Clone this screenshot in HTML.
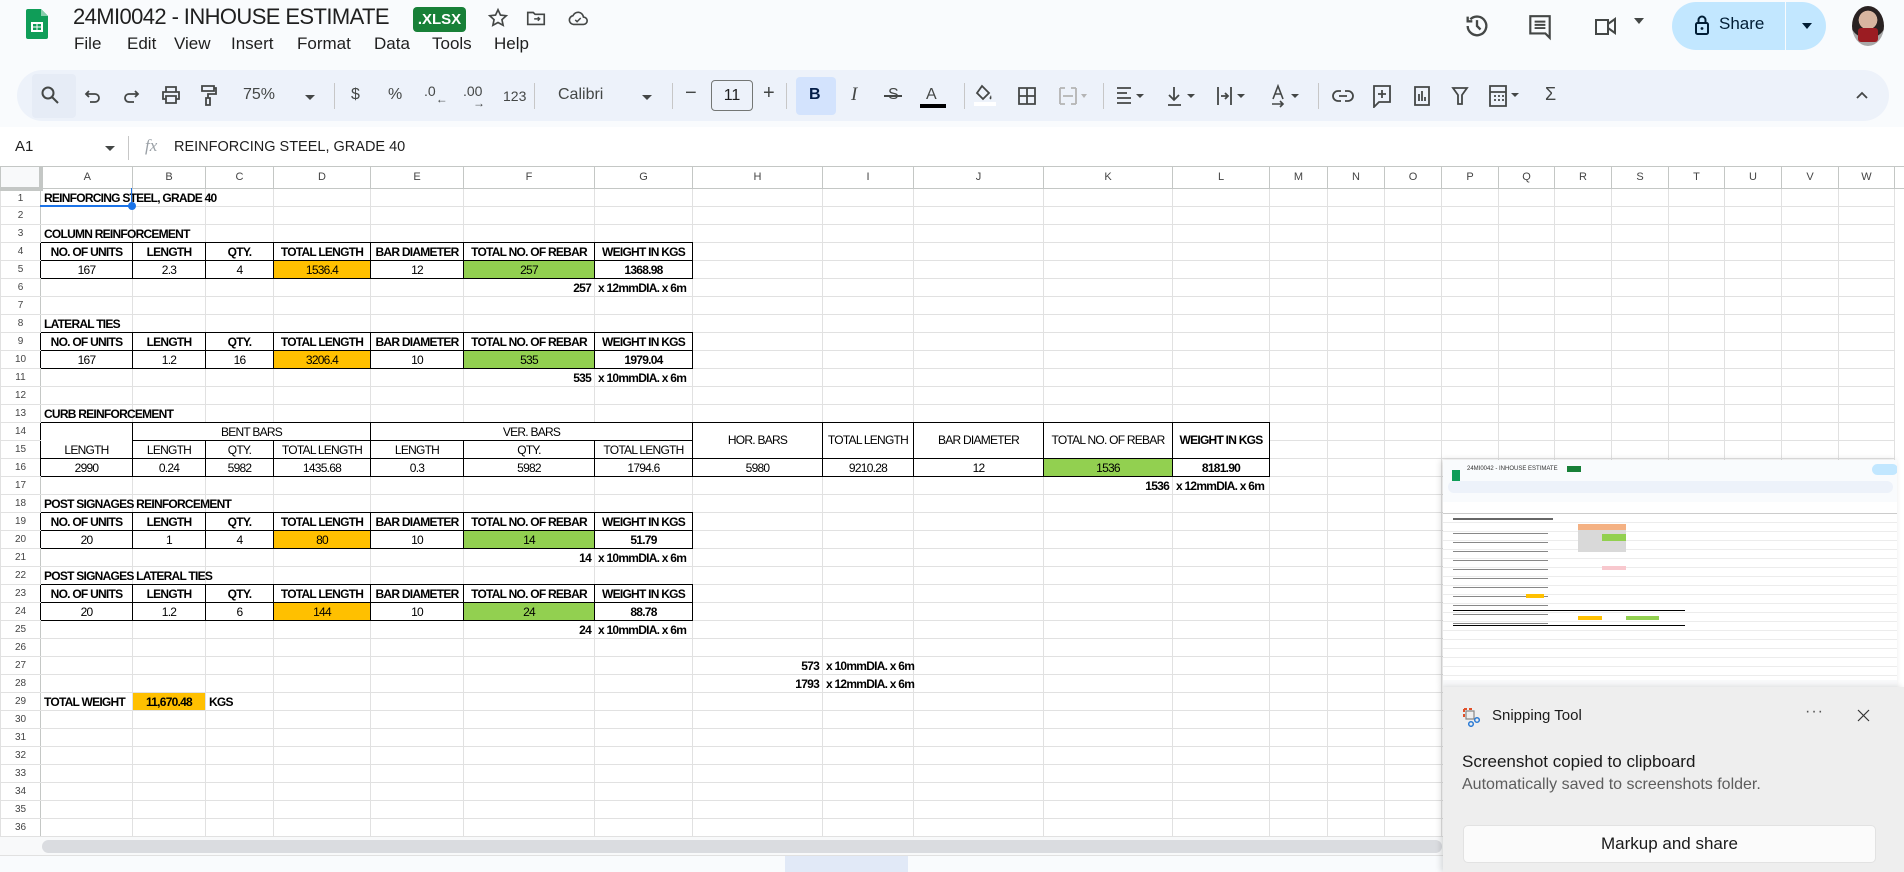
<!DOCTYPE html>
<html><head><meta charset="utf-8">
<style>
*{box-sizing:border-box;margin:0;padding:0}
body{width:1904px;height:872px;overflow:hidden;background:#f9fbfd;font-family:"Liberation Sans",sans-serif;position:relative;color:#1f1f1f}
.a{position:absolute}
.menu span{position:absolute;top:34px;font-size:17px;color:#1f1f1f}
.tb{position:absolute;left:17px;top:70px;width:1872px;height:51px;border-radius:26px;background:#edf2fa}
.ti{position:absolute;top:86px;font-size:16px;color:#444746}
.sep{position:absolute;top:83px;width:1px;height:26px;background:#c7c7c7}
svg.i{position:absolute}
#grid{position:absolute;left:0;top:166px;background:#fff;border-collapse:collapse;table-layout:fixed;width:1904px}
#grid td{height:18px;border:1px solid #e1e1e1;font-family:"Liberation Sans",sans-serif;font-size:12px;letter-spacing:-0.75px;white-space:nowrap;overflow:visible;padding:0 3px;vertical-align:bottom;line-height:15px;color:#000}
#grid tr.hd td{height:22px;text-align:center;vertical-align:middle;color:#444;font-size:11px;letter-spacing:0;border-color:#c4c7c5;border-bottom:1px solid #c4c7c5}
#grid td.h{text-align:center;color:#444;font-size:10px;letter-spacing:0;vertical-align:middle;border-right:1px solid #c4c7c5;padding:0}
#grid td.kl{border-right:1px solid #000}
#grid td.kt{border-bottom:1px solid #000}
#grid td.k{border:1px solid #000}
#grid td.c{text-align:center}
#grid td.r{text-align:right}
#grid td.b{font-weight:bold}
#grid td.or{background:#ffc000}
#grid td.gr{background:#92d050}
#grid td.m{vertical-align:middle}
</style></head><body>

<svg class="i" style="left:26px;top:9px" width="22" height="30" viewBox="0 0 22 30"><path d="M2 0h13l7 7v21a2 2 0 0 1-2 2H2a2 2 0 0 1-2-2V2a2 2 0 0 1 2-2z" fill="#0f9d58"/><path d="M15 0l7 7h-7z" fill="#87ceac"/><rect x="5" y="13" width="12" height="10" fill="#fff"/><rect x="7" y="15" width="3.5" height="2.5" fill="#0f9d58"/><rect x="11.5" y="15" width="3.5" height="2.5" fill="#0f9d58"/><rect x="7" y="18.5" width="3.5" height="2.5" fill="#0f9d58"/><rect x="11.5" y="18.5" width="3.5" height="2.5" fill="#0f9d58"/></svg>
<div class="a" style="left:73px;top:4px;font-size:22px;letter-spacing:-0.6px;color:#1f1f1f">24MI0042 - INHOUSE ESTIMATE</div>
<div class="a" style="left:413px;top:7px;width:53px;height:25px;background:#188038;border-radius:4px;color:#fff;font-size:15px;font-weight:bold;text-align:center;line-height:25px">.XLSX</div>
<svg class="i" style="left:487px;top:7px" width="22" height="22" viewBox="0 0 24 24"><path d="M12 3l2.7 5.8 6.3.7-4.7 4.3 1.3 6.2L12 16.9 6.4 20l1.3-6.2L3 9.5l6.3-.7z" fill="none" stroke="#444746" stroke-width="1.8"/></svg>
<svg class="i" style="left:525px;top:7px" width="22" height="22" viewBox="0 0 24 24"><path d="M3 6h6l2 2h10v11H3z" fill="none" stroke="#444746" stroke-width="1.8"/><path d="M10 13h6m-2-2l2 2-2 2" stroke="#444746" stroke-width="1.6" fill="none"/></svg>
<svg class="i" style="left:566px;top:7px" width="24" height="22" viewBox="0 0 24 24"><path d="M7 19h11a4 4 0 0 0 0-8 6 6 0 0 0-11.5-1.5A4.8 4.8 0 0 0 7 19z" fill="none" stroke="#444746" stroke-width="1.8"/><path d="M9 14l2 2 4-4" stroke="#444746" stroke-width="1.6" fill="none"/></svg>
<div class="menu"><span style="left:74px">File</span><span style="left:127px">Edit</span><span style="left:174px">View</span><span style="left:231px">Insert</span><span style="left:297px">Format</span><span style="left:374px">Data</span><span style="left:432px">Tools</span><span style="left:494px">Help</span></div>

<svg class="i" style="left:1463px;top:12px" width="28" height="28" viewBox="0 0 24 24"><path d="M4 12a8 8 0 1 0 2.3-5.7M4 4v4h4" fill="none" stroke="#444746" stroke-width="2"/><path d="M12 7v5l3 3" fill="none" stroke="#444746" stroke-width="2"/></svg>
<svg class="i" style="left:1527px;top:13px" width="26" height="28" viewBox="0 0 24 26"><path d="M3 3h18v16H21v4l-4-4H3z" fill="none" stroke="#444746" stroke-width="2"/><path d="M7 8h10M7 11h10M7 14h10" stroke="#444746" stroke-width="1.8"/></svg>
<svg class="i" style="left:1593px;top:14px" width="28" height="24" viewBox="0 0 28 24"><path d="M3 6h12v14H3z M15 10l7-5v14l-7-5" fill="none" stroke="#444746" stroke-width="2"/></svg>
<div class="a" style="left:1634px;top:18px;width:0;height:0;border-left:5px solid transparent;border-right:5px solid transparent;border-top:6px solid #444746"></div>
<div class="a" style="left:1672px;top:2px;width:154px;height:48px;border-radius:24px;background:#c2e7ff"></div>
<div class="a" style="left:1785px;top:2px;width:1px;height:48px;background:#f9fbfd"></div>
<svg class="i" style="left:1694px;top:14px" width="16" height="22" viewBox="0 0 16 22"><rect x="2" y="9" width="12" height="11" rx="1.5" fill="none" stroke="#001d35" stroke-width="2"/><path d="M4.5 9V6a3.5 3.5 0 0 1 7 0v3" fill="none" stroke="#001d35" stroke-width="2"/><circle cx="8" cy="14.5" r="1.4" fill="#001d35"/></svg>
<div class="a" style="left:1719px;top:14px;font-size:17px;color:#001d35">Share</div>
<div class="a" style="left:1802px;top:23px;width:0;height:0;border-left:5px solid transparent;border-right:5px solid transparent;border-top:6px solid #001d35"></div>
<div class="a" style="left:1852px;top:6px;width:32px;height:40px;border-radius:50%;background:radial-gradient(circle at 50% 35%,#d8b5a0 0 30%,#2a2222 31% 60%,#a8a8a8 61%);overflow:hidden"><div class="a" style="left:6px;top:22px;width:20px;height:14px;background:#9b1c22;border-radius:3px"></div></div>

<div class="tb"></div>
<div class="a" style="left:32px;top:74px;width:44px;height:44px;border-radius:4px;background:#e6ecf6"></div>
<svg class="i" style="left:40px;top:85px" width="20" height="20" viewBox="0 0 20 20"><circle cx="8" cy="8" r="5.5" fill="none" stroke="#444746" stroke-width="2"/><path d="M12 12l6 6" stroke="#444746" stroke-width="2"/></svg>
<svg class="i" style="left:84px;top:87px" width="18" height="18" viewBox="0 0 18 18"><path d="M5 4L2 7l3 3M2 7h9a4 4 0 0 1 0 8H6" fill="none" stroke="#444746" stroke-width="1.8"/></svg>
<svg class="i" style="left:122px;top:87px" width="18" height="18" viewBox="0 0 18 18"><path d="M13 4l3 3-3 3M16 7H7a4 4 0 0 0 0 8h5" fill="none" stroke="#444746" stroke-width="1.8"/></svg>
<svg class="i" style="left:161px;top:85px" width="20" height="20" viewBox="0 0 20 20"><path d="M5 7V2h10v5M5 14H2V7h16v7h-3M5 11h10v7H5z" fill="none" stroke="#444746" stroke-width="1.8"/></svg>
<svg class="i" style="left:199px;top:84px" width="18" height="22" viewBox="0 0 18 22"><path d="M3 2h12v5H3zM15 4h2v6H9v4M7 14h4v7H7z" fill="none" stroke="#444746" stroke-width="1.8"/></svg>
<div class="ti" style="left:243px;font-size:16px">75%</div>
<div class="a" style="left:305px;top:95px;border-left:5px solid transparent;border-right:5px solid transparent;border-top:5px solid #444746"></div>
<div class="sep" style="left:334px"></div>
<div class="ti" style="left:351px">$</div>
<div class="ti" style="left:388px">%</div>
<div class="ti" style="left:424px;font-size:14px;top:83px">.0<span style="font-size:12px;position:relative;top:7px">←</span></div>
<div class="ti" style="left:463px;font-size:14px;top:83px">.00<span style="font-size:12px;position:absolute;left:10px;top:13px">→</span></div>
<div class="ti" style="left:503px;font-size:14px;top:88px">123</div>
<div class="sep" style="left:534px"></div>
<div class="ti" style="left:558px;font-size:16px">Calibri</div>
<div class="a" style="left:642px;top:95px;border-left:5px solid transparent;border-right:5px solid transparent;border-top:5px solid #444746"></div>
<div class="sep" style="left:672px"></div>
<div class="ti" style="left:685px;font-size:20px;top:82px">−</div>
<div class="a" style="left:711px;top:80px;width:42px;height:31px;border:1px solid #747775;border-radius:4px;font-size:16px;text-align:center;line-height:29px;color:#1f1f1f">11</div>
<div class="ti" style="left:763px;font-size:20px;top:82px">+</div>
<div class="sep" style="left:786px"></div>
<div class="a" style="left:796px;top:77px;width:40px;height:38px;border-radius:4px;background:#d3e3fd"></div>
<div class="ti" style="left:809px;font-weight:bold;color:#041e49">B</div>
<div class="ti" style="left:851px;font-style:italic;font-family:'Liberation Serif',serif;font-size:19px;top:84px">I</div>
<div class="ti" style="left:888px">S</div><div class="a" style="left:884px;top:95px;width:18px;height:2px;background:#444746"></div>
<div class="ti" style="left:926px">A</div><div class="a" style="left:920px;top:104px;width:26px;height:4px;background:#000"></div>
<div class="sep" style="left:964px"></div>
<svg class="i" style="left:974px;top:83px" width="22" height="24" viewBox="0 0 22 24"><path d="M8 3l7 7-6 6-6-6z" fill="none" stroke="#444746" stroke-width="1.8"/><path d="M17 12c-1 2-2 3-1 4s2 0 1-4z" fill="#444746"/><rect x="0" y="19" width="22" height="4" fill="#fff"/></svg>
<svg class="i" style="left:1017px;top:86px" width="20" height="20" viewBox="0 0 20 20"><path d="M2 2h16v16H2zM10 2v16M2 10h16" fill="none" stroke="#444746" stroke-width="1.8"/></svg>
<svg class="i" style="left:1058px;top:86px" width="30" height="20" viewBox="0 0 30 20"><path d="M2 2h5M2 18h5M13 2h5M13 18h5M2 2v16M18 2v16M5 10h10" fill="none" stroke="#b4b4b4" stroke-width="1.8"/><path d="M23 8l3 4 3-4z" fill="#b4b4b4"/></svg>
<div class="sep" style="left:1103px"></div>
<svg class="i" style="left:1115px;top:86px" width="36" height="20" viewBox="0 0 36 20"><path d="M2 2h14M2 7h10M2 12h14M2 17h14" stroke="#444746" stroke-width="1.8"/><path d="M21 8l4 4 4-4z" fill="#444746"/></svg>
<svg class="i" style="left:1166px;top:85px" width="36" height="22" viewBox="0 0 36 22"><path d="M8 2v12M3 10l5 5 5-5M2 20h13" fill="none" stroke="#444746" stroke-width="1.8"/><path d="M21 9l4 4 4-4z" fill="#444746"/></svg>
<svg class="i" style="left:1216px;top:85px" width="36" height="22" viewBox="0 0 36 22"><path d="M2 2v18M15 2v18M5 11h7M9 8l3 3-3 3" fill="none" stroke="#444746" stroke-width="1.8"/><path d="M21 9l4 4 4-4z" fill="#444746"/></svg>
<svg class="i" style="left:1270px;top:84px" width="36" height="24" viewBox="0 0 36 24"><path d="M3 15L8 2l5 13M5 10h6M2 20h11M10 17l3 3-3 3" fill="none" stroke="#444746" stroke-width="1.6"/><path d="M21 10l4 4 4-4z" fill="#444746"/></svg>
<div class="sep" style="left:1318px"></div>
<svg class="i" style="left:1332px;top:88px" width="22" height="16" viewBox="0 0 22 16"><path d="M9 3H6a5 5 0 0 0 0 10h3M13 3h3a5 5 0 0 1 0 10h-3M7 8h8" fill="none" stroke="#444746" stroke-width="1.8"/></svg>
<svg class="i" style="left:1372px;top:84px" width="20" height="24" viewBox="0 0 20 24"><path d="M2 2h16v16H7l-5 5z" fill="none" stroke="#444746" stroke-width="1.8"/><path d="M10 6v8M6 10h8" stroke="#444746" stroke-width="1.8"/></svg>
<svg class="i" style="left:1413px;top:85px" width="18" height="22" viewBox="0 0 18 22"><path d="M2 2h14v18H2z" fill="none" stroke="#444746" stroke-width="1.8"/><path d="M6 16V9M9 16V6M12 16v-4" stroke="#444746" stroke-width="1.8"/></svg>
<svg class="i" style="left:1451px;top:86px" width="18" height="20" viewBox="0 0 18 20"><path d="M2 2h14l-5 7v9H7V9z" fill="none" stroke="#444746" stroke-width="1.8"/></svg>
<svg class="i" style="left:1488px;top:84px" width="36" height="24" viewBox="0 0 36 24"><path d="M2 2h16v20H2zM2 8h16M6 12h2M10 12h2M14 12h2M6 16h2M10 16h2M14 16h2" fill="none" stroke="#444746" stroke-width="1.8"/><path d="M23 9l4 4 4-4z" fill="#444746"/></svg>
<div class="ti" style="left:1545px;font-size:18px;top:84px">Σ</div>
<svg class="i" style="left:1855px;top:90px" width="14" height="10" viewBox="0 0 14 10"><path d="M2 8l5-5 5 5" fill="none" stroke="#444746" stroke-width="1.8"/></svg>

<div class="a" style="left:0;top:127px;width:1904px;height:39px;background:#fff"></div>
<div class="a" style="left:15px;top:138px;font-size:15px">A1</div>
<div class="a" style="left:105px;top:146px;border-left:5px solid transparent;border-right:5px solid transparent;border-top:5px solid #444746"></div>
<div class="a" style="left:128px;top:136px;width:1px;height:24px;background:#c7c7c7"></div>
<div class="a" style="left:145px;top:136px;font-size:17px;font-style:italic;font-family:'Liberation Serif',serif;color:#9aa0a6">fx</div>
<div class="a" style="left:174px;top:139px;font-size:14.5px">REINFORCING STEEL, GRADE 40</div>

<table id="grid">
<colgroup><col style="width:40px"><col style="width:92px"><col style="width:73px"><col style="width:68px"><col style="width:97px"><col style="width:93px"><col style="width:131px"><col style="width:98px"><col style="width:130px"><col style="width:91px"><col style="width:130px"><col style="width:129px"><col style="width:97px"><col style="width:58px"><col style="width:57px"><col style="width:57px"><col style="width:57px"><col style="width:56px"><col style="width:57px"><col style="width:57px"><col style="width:56px"><col style="width:57px"><col style="width:57px"><col style="width:56px"><col style="width:10px"></colgroup>
<tr class="hd"><td style="background:#f8f9fa;border-right:4px solid #c4c7c5;border-bottom:4px solid #c4c7c5"></td><td>A</td><td>B</td><td>C</td><td>D</td><td>E</td><td>F</td><td>G</td><td>H</td><td>I</td><td>J</td><td>K</td><td>L</td><td>M</td><td>N</td><td>O</td><td>P</td><td>Q</td><td>R</td><td>S</td><td>T</td><td>U</td><td>V</td><td>W</td><td></td></tr>
<tr><td class="h">1</td><td class="b">REINFORCING STEEL, GRADE 40</td><td></td><td></td><td></td><td></td><td></td><td></td><td></td><td></td><td></td><td></td><td></td><td></td><td></td><td></td><td></td><td></td><td></td><td></td><td></td><td></td><td></td><td></td></tr>
<tr><td class="h">2</td><td></td><td></td><td></td><td></td><td></td><td></td><td></td><td></td><td></td><td></td><td></td><td></td><td></td><td></td><td></td><td></td><td></td><td></td><td></td><td></td><td></td><td></td><td></td></tr>
<tr><td class="h">3</td><td class="b kt">COLUMN REINFORCEMENT</td><td class="kt"></td><td class="kt"></td><td class="kt"></td><td class="kt"></td><td class="kt"></td><td class="kt"></td><td></td><td></td><td></td><td></td><td></td><td></td><td></td><td></td><td></td><td></td><td></td><td></td><td></td><td></td><td></td><td></td></tr>
<tr><td class="h kl">4</td><td class="k c b">NO. OF UNITS</td><td class="k c b">LENGTH</td><td class="k c b">QTY.</td><td class="k c b">TOTAL LENGTH</td><td class="k c b">BAR DIAMETER</td><td class="k c b">TOTAL NO. OF REBAR</td><td class="k c b">WEIGHT IN KGS</td><td></td><td></td><td></td><td></td><td></td><td></td><td></td><td></td><td></td><td></td><td></td><td></td><td></td><td></td><td></td><td></td></tr>
<tr><td class="h kl">5</td><td class="k c">167</td><td class="k c">2.3</td><td class="k c">4</td><td class="k c or">1536.4</td><td class="k c">12</td><td class="k c gr">257</td><td class="k c b">1368.98</td><td></td><td></td><td></td><td></td><td></td><td></td><td></td><td></td><td></td><td></td><td></td><td></td><td></td><td></td><td></td><td></td></tr>
<tr><td class="h">6</td><td></td><td></td><td></td><td></td><td></td><td class="r b">257</td><td class="b">x 12mmDIA. x 6m</td><td></td><td></td><td></td><td></td><td></td><td></td><td></td><td></td><td></td><td></td><td></td><td></td><td></td><td></td><td></td><td></td></tr>
<tr><td class="h">7</td><td></td><td></td><td></td><td></td><td></td><td></td><td></td><td></td><td></td><td></td><td></td><td></td><td></td><td></td><td></td><td></td><td></td><td></td><td></td><td></td><td></td><td></td><td></td></tr>
<tr><td class="h">8</td><td class="b kt">LATERAL TIES</td><td class="kt"></td><td class="kt"></td><td class="kt"></td><td class="kt"></td><td class="kt"></td><td class="kt"></td><td></td><td></td><td></td><td></td><td></td><td></td><td></td><td></td><td></td><td></td><td></td><td></td><td></td><td></td><td></td><td></td></tr>
<tr><td class="h kl">9</td><td class="k c b">NO. OF UNITS</td><td class="k c b">LENGTH</td><td class="k c b">QTY.</td><td class="k c b">TOTAL LENGTH</td><td class="k c b">BAR DIAMETER</td><td class="k c b">TOTAL NO. OF REBAR</td><td class="k c b">WEIGHT IN KGS</td><td></td><td></td><td></td><td></td><td></td><td></td><td></td><td></td><td></td><td></td><td></td><td></td><td></td><td></td><td></td><td></td></tr>
<tr><td class="h kl">10</td><td class="k c">167</td><td class="k c">1.2</td><td class="k c">16</td><td class="k c or">3206.4</td><td class="k c">10</td><td class="k c gr">535</td><td class="k c b">1979.04</td><td></td><td></td><td></td><td></td><td></td><td></td><td></td><td></td><td></td><td></td><td></td><td></td><td></td><td></td><td></td><td></td></tr>
<tr><td class="h">11</td><td></td><td></td><td></td><td></td><td></td><td class="r b">535</td><td class="b">x 10mmDIA. x 6m</td><td></td><td></td><td></td><td></td><td></td><td></td><td></td><td></td><td></td><td></td><td></td><td></td><td></td><td></td><td></td><td></td></tr>
<tr><td class="h">12</td><td></td><td></td><td></td><td></td><td></td><td></td><td></td><td></td><td></td><td></td><td></td><td></td><td></td><td></td><td></td><td></td><td></td><td></td><td></td><td></td><td></td><td></td><td></td></tr>
<tr><td class="h">13</td><td class="b kt">CURB REINFORCEMENT</td><td class="kt"></td><td class="kt"></td><td class="kt"></td><td class="kt"></td><td class="kt"></td><td class="kt"></td><td class="kt"></td><td class="kt"></td><td class="kt"></td><td class="kt"></td><td class="kt"></td><td></td><td></td><td></td><td></td><td></td><td></td><td></td><td></td><td></td><td></td><td></td></tr>
<tr><td class="h kl">14</td><td class="k c" rowspan="2">LENGTH</td><td class="k c" colspan="3">BENT BARS</td><td class="k c" colspan="3">VER. BARS</td><td class="k c m" rowspan="2">HOR. BARS</td><td class="k c m" rowspan="2">TOTAL LENGTH</td><td class="k c m" rowspan="2">BAR DIAMETER</td><td class="k c m" rowspan="2">TOTAL NO. OF REBAR</td><td class="k c m b" rowspan="2">WEIGHT IN KGS</td><td></td><td></td><td></td><td></td><td></td><td></td><td></td><td></td><td></td><td></td><td></td></tr>
<tr><td class="h kl">15</td><td class="k c">LENGTH</td><td class="k c">QTY.</td><td class="k c">TOTAL LENGTH</td><td class="k c">LENGTH</td><td class="k c">QTY.</td><td class="k c">TOTAL LENGTH</td><td></td><td></td><td></td><td></td><td></td><td></td><td></td><td></td><td></td><td></td><td></td></tr>
<tr><td class="h kl">16</td><td class="k c">2990</td><td class="k c">0.24</td><td class="k c">5982</td><td class="k c">1435.68</td><td class="k c">0.3</td><td class="k c">5982</td><td class="k c">1794.6</td><td class="k c">5980</td><td class="k c">9210.28</td><td class="k c">12</td><td class="k c gr">1536</td><td class="k c b">8181.90</td><td></td><td></td><td></td><td></td><td></td><td></td><td></td><td></td><td></td><td></td><td></td></tr>
<tr><td class="h">17</td><td></td><td></td><td></td><td></td><td></td><td></td><td></td><td></td><td></td><td></td><td class="r b">1536</td><td class="b">x 12mmDIA. x 6m</td><td></td><td></td><td></td><td></td><td></td><td></td><td></td><td></td><td></td><td></td><td></td></tr>
<tr><td class="h">18</td><td class="b kt">POST SIGNAGES REINFORCEMENT</td><td class="kt"></td><td class="kt"></td><td class="kt"></td><td class="kt"></td><td class="kt"></td><td class="kt"></td><td></td><td></td><td></td><td></td><td></td><td></td><td></td><td></td><td></td><td></td><td></td><td></td><td></td><td></td><td></td><td></td></tr>
<tr><td class="h kl">19</td><td class="k c b">NO. OF UNITS</td><td class="k c b">LENGTH</td><td class="k c b">QTY.</td><td class="k c b">TOTAL LENGTH</td><td class="k c b">BAR DIAMETER</td><td class="k c b">TOTAL NO. OF REBAR</td><td class="k c b">WEIGHT IN KGS</td><td></td><td></td><td></td><td></td><td></td><td></td><td></td><td></td><td></td><td></td><td></td><td></td><td></td><td></td><td></td><td></td></tr>
<tr><td class="h kl">20</td><td class="k c">20</td><td class="k c">1</td><td class="k c">4</td><td class="k c or">80</td><td class="k c">10</td><td class="k c gr">14</td><td class="k c b">51.79</td><td></td><td></td><td></td><td></td><td></td><td></td><td></td><td></td><td></td><td></td><td></td><td></td><td></td><td></td><td></td><td></td></tr>
<tr><td class="h">21</td><td></td><td></td><td></td><td></td><td></td><td class="r b">14</td><td class="b">x 10mmDIA. x 6m</td><td></td><td></td><td></td><td></td><td></td><td></td><td></td><td></td><td></td><td></td><td></td><td></td><td></td><td></td><td></td><td></td></tr>
<tr><td class="h">22</td><td class="b kt">POST SIGNAGES LATERAL TIES</td><td class="kt"></td><td class="kt"></td><td class="kt"></td><td class="kt"></td><td class="kt"></td><td class="kt"></td><td></td><td></td><td></td><td></td><td></td><td></td><td></td><td></td><td></td><td></td><td></td><td></td><td></td><td></td><td></td><td></td></tr>
<tr><td class="h kl">23</td><td class="k c b">NO. OF UNITS</td><td class="k c b">LENGTH</td><td class="k c b">QTY.</td><td class="k c b">TOTAL LENGTH</td><td class="k c b">BAR DIAMETER</td><td class="k c b">TOTAL NO. OF REBAR</td><td class="k c b">WEIGHT IN KGS</td><td></td><td></td><td></td><td></td><td></td><td></td><td></td><td></td><td></td><td></td><td></td><td></td><td></td><td></td><td></td><td></td></tr>
<tr><td class="h kl">24</td><td class="k c">20</td><td class="k c">1.2</td><td class="k c">6</td><td class="k c or">144</td><td class="k c">10</td><td class="k c gr">24</td><td class="k c b">88.78</td><td></td><td></td><td></td><td></td><td></td><td></td><td></td><td></td><td></td><td></td><td></td><td></td><td></td><td></td><td></td><td></td></tr>
<tr><td class="h">25</td><td></td><td></td><td></td><td></td><td></td><td class="r b">24</td><td class="b">x 10mmDIA. x 6m</td><td></td><td></td><td></td><td></td><td></td><td></td><td></td><td></td><td></td><td></td><td></td><td></td><td></td><td></td><td></td><td></td></tr>
<tr><td class="h">26</td><td></td><td></td><td></td><td></td><td></td><td></td><td></td><td></td><td></td><td></td><td></td><td></td><td></td><td></td><td></td><td></td><td></td><td></td><td></td><td></td><td></td><td></td><td></td></tr>
<tr><td class="h">27</td><td></td><td></td><td></td><td></td><td></td><td></td><td></td><td class="r b">573</td><td class="b">x 10mmDIA. x 6m</td><td></td><td></td><td></td><td></td><td></td><td></td><td></td><td></td><td></td><td></td><td></td><td></td><td></td><td></td></tr>
<tr><td class="h">28</td><td></td><td></td><td></td><td></td><td></td><td></td><td></td><td class="r b">1793</td><td class="b">x 12mmDIA. x 6m</td><td></td><td></td><td></td><td></td><td></td><td></td><td></td><td></td><td></td><td></td><td></td><td></td><td></td><td></td></tr>
<tr><td class="h">29</td><td class="b">TOTAL WEIGHT</td><td class="c b or">11,670.48</td><td class="b">KGS</td><td></td><td></td><td></td><td></td><td></td><td></td><td></td><td></td><td></td><td></td><td></td><td></td><td></td><td></td><td></td><td></td><td></td><td></td><td></td><td></td></tr>
<tr><td class="h">30</td><td></td><td></td><td></td><td></td><td></td><td></td><td></td><td></td><td></td><td></td><td></td><td></td><td></td><td></td><td></td><td></td><td></td><td></td><td></td><td></td><td></td><td></td><td></td></tr>
<tr><td class="h">31</td><td></td><td></td><td></td><td></td><td></td><td></td><td></td><td></td><td></td><td></td><td></td><td></td><td></td><td></td><td></td><td></td><td></td><td></td><td></td><td></td><td></td><td></td><td></td></tr>
<tr><td class="h">32</td><td></td><td></td><td></td><td></td><td></td><td></td><td></td><td></td><td></td><td></td><td></td><td></td><td></td><td></td><td></td><td></td><td></td><td></td><td></td><td></td><td></td><td></td><td></td></tr>
<tr><td class="h">33</td><td></td><td></td><td></td><td></td><td></td><td></td><td></td><td></td><td></td><td></td><td></td><td></td><td></td><td></td><td></td><td></td><td></td><td></td><td></td><td></td><td></td><td></td><td></td></tr>
<tr><td class="h">34</td><td></td><td></td><td></td><td></td><td></td><td></td><td></td><td></td><td></td><td></td><td></td><td></td><td></td><td></td><td></td><td></td><td></td><td></td><td></td><td></td><td></td><td></td><td></td></tr>
<tr><td class="h">35</td><td></td><td></td><td></td><td></td><td></td><td></td><td></td><td></td><td></td><td></td><td></td><td></td><td></td><td></td><td></td><td></td><td></td><td></td><td></td><td></td><td></td><td></td><td></td></tr>
<tr><td class="h">36</td><td></td><td></td><td></td><td></td><td></td><td></td><td></td><td></td><td></td><td></td><td></td><td></td><td></td><td></td><td></td><td></td><td></td><td></td><td></td><td></td><td></td><td></td><td></td></tr>
</table>

<div class="a" style="left:40px;top:205px;width:92px;height:2px;background:#1a73e8"></div>
<div class="a" style="left:131px;top:188px;width:1px;height:18px;background:#1a73e8"></div>
<div class="a" style="left:128px;top:202px;width:8px;height:8px;border-radius:50%;background:#1a73e8"></div>

<div class="a" style="left:0;top:836px;width:1904px;height:19px;background:#f8f9fa;border-top:1px solid #e1e1e1"></div>
<div class="a" style="left:42px;top:840px;width:1400px;height:13px;border-radius:7px;background:#dadce0"></div>
<div class="a" style="left:0;top:855px;width:1904px;height:17px;background:#f9fbfd;border-top:1px solid #e1e1e1"></div>
<div class="a" style="left:785px;top:856px;width:123px;height:16px;background:#e1e9f7"></div>

<div class="a" style="left:1443px;top:460px;width:454px;height:227px;background:#fff;box-shadow:-2px 0 6px rgba(0,0,0,.15);overflow:hidden">
 <div class="a" style="left:0;top:0;width:454px;height:42px;background:#f9fbfd"></div>
 <div class="a" style="left:9px;top:10px;width:8px;height:11px;background:#0f9d58"></div>
 <div class="a" style="left:24px;top:6px;font-size:6px;color:#333">24MI0042 - INHOUSE ESTIMATE</div>
 <div class="a" style="left:124px;top:6px;width:14px;height:6px;background:#188038"></div>
 <div class="a" style="left:429px;top:4px;width:26px;height:11px;border-radius:6px;background:#c2e7ff"></div>
 <div class="a" style="left:5px;top:21px;width:445px;height:12px;border-radius:6px;background:#edf2fa"></div>
 <div class="a" style="left:0;top:48px;width:454px;height:6px;border-bottom:1px solid #ccc"></div>
 <div class="a" style="left:0;top:54px;width:454px;height:170px;background:repeating-linear-gradient(180deg,#fff 0 8px,#ececec 8px 9px)"></div>
 <div class="a" style="left:10px;top:58px;width:100px;height:2px;background:#666"></div>
 <div class="a" style="left:10px;top:68px;width:95px;height:98px;background:repeating-linear-gradient(180deg,transparent 0 5px,#888 5px 6px,transparent 6px 9px)"></div>
 <div class="a" style="left:135px;top:64px;width:48px;height:6px;background:#f4b183"></div>
 <div class="a" style="left:135px;top:70px;width:48px;height:22px;background:#d9d9d9"></div>
 <div class="a" style="left:159px;top:74px;width:24px;height:7px;background:#92d050"></div>
 <div class="a" style="left:159px;top:106px;width:24px;height:4px;background:#f8c8ce"></div>
 <div class="a" style="left:83px;top:134px;width:18px;height:4px;background:#ffc000"></div>
 <div class="a" style="left:10px;top:150px;width:232px;height:1px;background:#000"></div>
 <div class="a" style="left:10px;top:165px;width:232px;height:1px;background:#000"></div>
 <div class="a" style="left:135px;top:156px;width:24px;height:4px;background:#ffc000"></div>
 <div class="a" style="left:183px;top:156px;width:33px;height:4px;background:#92d050"></div>
 <div class="a" style="left:0;top:220px;width:454px;height:7px;background:#f8f9fa"></div>
</div>
<div class="a" style="left:1443px;top:687px;width:461px;height:185px;background:#eeeeee;box-shadow:-2px 0 6px rgba(0,0,0,.15)"></div>
<svg class="i" style="left:1462px;top:707px" width="20" height="20" viewBox="0 0 20 20"><path d="M2 2h3M7 2h3M2 2v3M2 7v3" stroke="#e0502a" stroke-width="2"/><path d="M4 4h8v8H4z" fill="none" stroke="#888" stroke-width="1.2"/><circle cx="15" cy="13" r="2.3" fill="none" stroke="#2a7ad4" stroke-width="1.5"/><circle cx="9" cy="17" r="2.3" fill="none" stroke="#2a7ad4" stroke-width="1.5"/></svg>
<div class="a" style="left:1492px;top:707px;font-size:15px;color:#1a1a1a">Snipping Tool</div>
<div class="a" style="left:1805px;top:703px;font-size:16px;color:#555;letter-spacing:1px">···</div>
<svg class="i" style="left:1857px;top:709px" width="13" height="13" viewBox="0 0 13 13"><path d="M1 1l11 11M12 1L1 12" stroke="#333" stroke-width="1.2"/></svg>
<div class="a" style="left:1462px;top:752px;font-size:17px;color:#1a1a1a">Screenshot copied to clipboard</div>
<div class="a" style="left:1462px;top:776px;font-size:16px;color:#5d5d5d">Automatically saved to screenshots folder.</div>
<div class="a" style="left:1463px;top:825px;width:413px;height:38px;background:#fbfbfb;border:1px solid #e2e2e2;border-radius:5px;font-size:17px;text-align:center;line-height:36px;color:#1a1a1a">Markup and share</div>
</body></html>
